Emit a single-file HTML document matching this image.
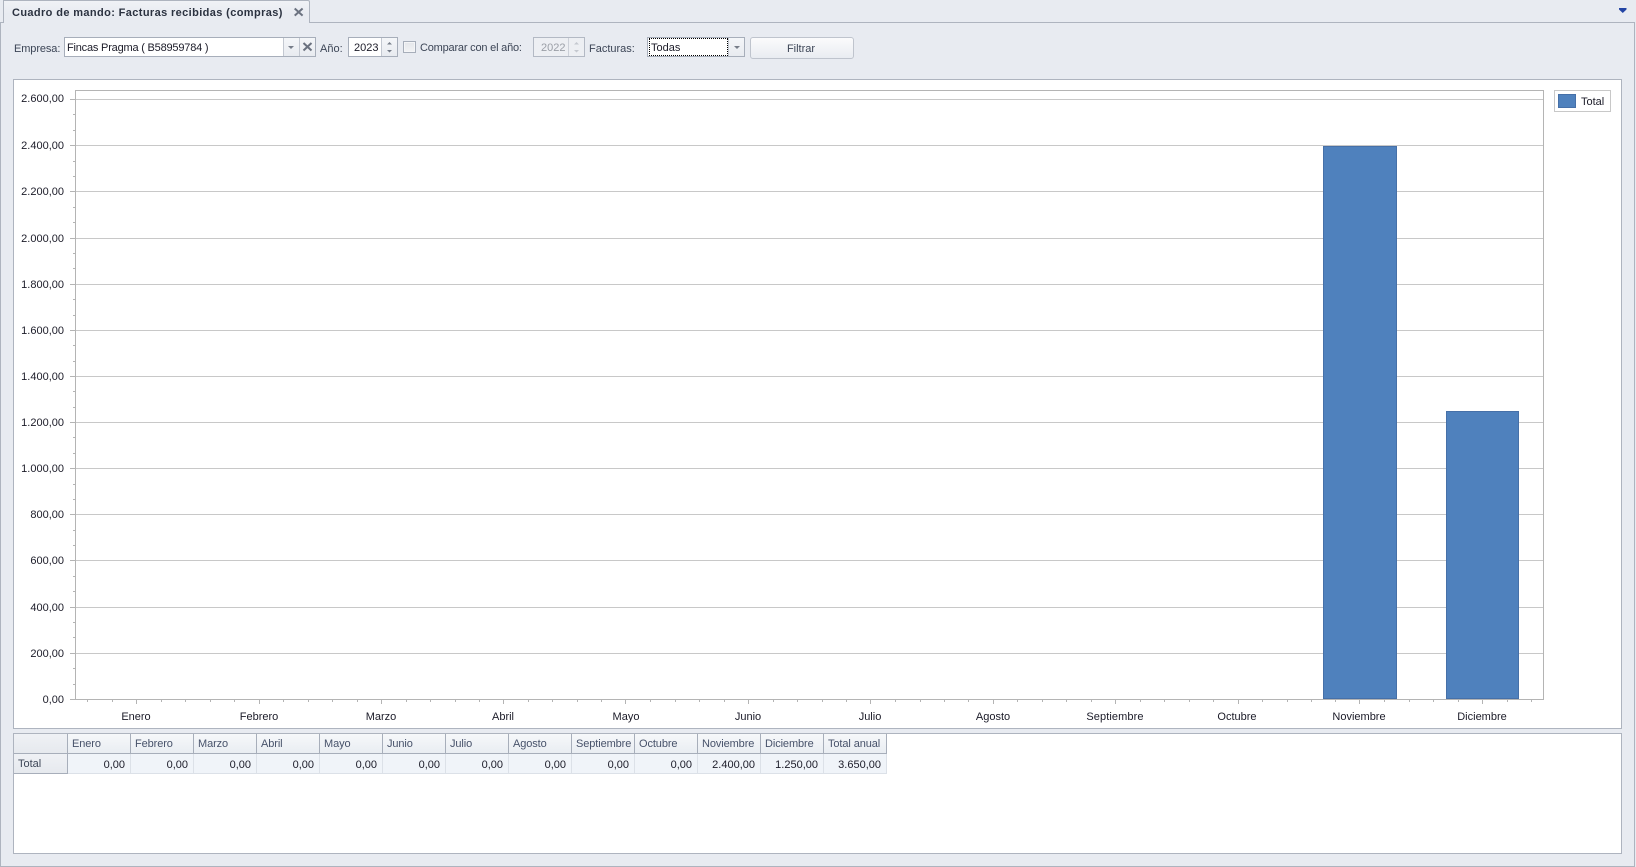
<!DOCTYPE html>
<html lang="es"><head><meta charset="utf-8"><title>Cuadro de mando</title>
<style>
html,body{margin:0;padding:0;width:1636px;height:867px;overflow:hidden;background:#E8EBF1}
body{position:relative;font:11px "Liberation Sans",Arial,sans-serif;color:#1b1b28}
.a{position:absolute;box-sizing:border-box}
.t{position:absolute;white-space:nowrap;line-height:14px;height:14px}
.lab{color:#3c4556}
.y{position:absolute;left:13px;width:51px;text-align:right;line-height:14px;white-space:nowrap}
.x{position:absolute;top:710px;width:100px;text-align:center;line-height:14px;white-space:nowrap}
.box{background:#fff;border:1px solid #A7AEBA}
.btn{background:linear-gradient(#f4f6f9,#e8ebf0);border-left:1px solid #C3C8D1}
table{position:absolute;left:14px;top:734px;border-collapse:separate;border-spacing:0;table-layout:fixed;width:872px}
td{box-sizing:border-box;height:20px;padding:0;overflow:hidden;white-space:nowrap;line-height:16px}
.h{background:linear-gradient(#f6f8fa,#e9edf2);border-right:1px solid #A7AEBA;border-bottom:1px solid #A7AEBA;padding:0 0 0 4px;color:#47526a;letter-spacing:-.1px}
.d{background:#F0F4F9;border-right:1px solid #DCE1E8;border-bottom:1px solid #DCE1E8;text-align:right;padding:3px 5px 0 0}
.r{background:linear-gradient(#eff1f5,#e6e9ee);border-right:1px solid #A7AEBA;border-bottom:1px solid #A7AEBA;padding:0 0 0 4px;color:#3c4556}
</style></head><body>

<!-- content frame -->
<div class="a" style="left:0;top:22px;width:1635px;height:845px;border:1px solid #AEB4BF"></div>
<!-- tab -->
<div class="a" style="left:3px;top:0;width:307px;height:23px;background:linear-gradient(#f0f2f6,#e8ebf1 60%);border:1px solid #AEB4BF;border-bottom:none;border-top-right-radius:2px"></div>
<div class="t" style="left:12px;top:6px;font-weight:bold;color:#2b3240;letter-spacing:.38px">Cuadro de mando: Facturas recibidas (compras)</div>
<svg class="a" style="left:294px;top:7px" width="10" height="10"><path d="M.7 1.5L8.6 8.6M8.6 1.5L.7 8.6" stroke="#6b7280" stroke-width="2" fill="none"/></svg>
<svg class="a" style="left:1619px;top:8px" width="8" height="5"><path d="M0 0H7.5V1.5L3.75 5L0 1.5Z" fill="#2344A4"/></svg>

<!-- toolbar -->
<div class="t lab" style="left:14px;top:42px;letter-spacing:-.1px">Empresa:</div>
<div class="a box" style="left:64px;top:37px;width:252px;height:20px"></div>
<div class="t" style="left:67px;top:41px;letter-spacing:-.2px">Fincas Pragma ( B58959784 )</div>
<div class="a btn" style="left:283px;top:38px;width:16px;height:18px"></div>
<div class="a btn" style="left:299px;top:38px;width:16px;height:18px"></div>
<svg class="a" style="left:288px;top:46px" width="7" height="4"><path d="M0 0H6L3 3Z" fill="#767d89"/></svg>
<svg class="a" style="left:302px;top:42px" width="11" height="10"><path d="M1.5 1L9.5 8.5M9.5 1L1.5 8.5" stroke="#6b7280" stroke-width="2" fill="none"/></svg>

<div class="t lab" style="left:320px;top:42px">Año:</div>
<div class="a box" style="left:348px;top:37px;width:50px;height:20px"></div>
<div class="t" style="left:354px;top:41px">2023</div>
<div class="a btn" style="left:381px;top:38px;width:16px;height:18px"></div>
<svg class="a" style="left:387px;top:41px" width="5" height="13"><path d="M2.5 1L5 3.5H0ZM0 9H5L2.5 11.5Z" fill="#767d89"/></svg>

<div class="a" style="left:403px;top:41px;width:13px;height:12px;background:linear-gradient(#e4e6ea,#f2f3f5);border:1px solid #A7AEBA;box-shadow:inset 0 0 0 1px #f4f5f7"></div>
<div class="t lab" style="left:420px;top:41px;letter-spacing:-.2px">Comparar con el año:</div>

<div class="a" style="left:533px;top:37px;width:52px;height:20px;background:#EDEFF3;border:1px solid #B3B9C4"></div>
<div class="t" style="left:541px;top:41px;color:#9a9ea6">2022</div>
<div class="a" style="left:568px;top:38px;width:16px;height:18px;background:#EDEFF3;border-left:1px solid #CCD0D8"></div>
<svg class="a" style="left:574px;top:41px" width="5" height="13"><path d="M2.5 1L5 3.5H0ZM0 9H5L2.5 11.5Z" fill="#C4C8CF"/></svg>

<div class="t lab" style="left:589px;top:42px">Facturas:</div>
<div class="a box" style="left:647px;top:37px;width:98px;height:20px"></div>
<div class="a" style="left:649px;top:38px;width:79px;height:18px;border:1px dotted #000"></div>
<div class="t" style="left:651px;top:41px">Todas</div>
<div class="a btn" style="left:728px;top:38px;width:16px;height:18px"></div>
<svg class="a" style="left:734px;top:46px" width="7" height="4"><path d="M0 0H6L3 3Z" fill="#767d89"/></svg>

<div class="a" style="left:750px;top:37px;width:104px;height:22px;background:linear-gradient(#fbfbfc,#e9ecf1);border:1px solid #BFC4CD;border-radius:3px"></div>
<div class="t lab" style="left:749px;top:42px;width:104px;text-align:center">Filtrar</div>

<!-- chart panel -->
<div class="a" style="left:13px;top:79px;width:1609px;height:650px;background:#fff;border:1px solid #AEB4BF"></div>
<svg class="a" style="left:0;top:0" width="1636" height="867" shape-rendering="crispEdges">
<path fill="none" stroke="#C8C8C8" d="M75 99.5H1543M75 145.5H1543M75 191.5H1543M75 238.5H1543M75 284.5H1543M75 330.5H1543M75 376.5H1543M75 422.5H1543M75 468.5H1543M75 514.5H1543M75 560.5H1543M75 607.5H1543M75 653.5H1543"/>
<rect x="1323.5" y="146.5" width="73" height="552" fill="#4F81BD" stroke="#4670A8"/>
<rect x="1446.5" y="411.5" width="72" height="287" fill="#4F81BD" stroke="#4670A8"/>
<rect x="75.5" y="90.5" width="1468" height="609" fill="none" stroke="#B4B4B4"/>
<path fill="none" stroke="#B4B4B4" d="M70 99.5H75M70 145.5H75M70 191.5H75M70 238.5H75M70 284.5H75M70 330.5H75M70 376.5H75M70 422.5H75M70 468.5H75M70 514.5H75M70 560.5H75M70 607.5H75M70 653.5H75M70 699.5H75
M73 114.5H75M73 130.5H75M73 161.5H75M73 176.5H75M73 207.5H75M73 222.5H75M73 253.5H75M73 268.5H75M73 299.5H75M73 315.5H75M73 345.5H75M73 361.5H75M73 391.5H75M73 407.5H75M73 437.5H75M73 453.5H75M73 484.5H75M73 499.5H75M73 530.5H75M73 545.5H75M73 576.5H75M73 591.5H75M73 622.5H75M73 637.5H75M73 668.5H75M73 684.5H75
M136.5 700V704M259.5 700V704M381.5 700V704M503.5 700V704M625.5 700V704M748.5 700V704M870.5 700V704M993.5 700V704M1115.5 700V704M1238.5 700V704M1359.5 700V704M1482.5 700V704
M87.5 700V702M112.5 700V702M161.5 700V702M185.5 700V702M210.5 700V702M234.5 700V702M283.5 700V702M308.5 700V702M332.5 700V702M357.5 700V702M406.5 700V702M430.5 700V702M455.5 700V702M479.5 700V702M528.5 700V702M552.5 700V702M577.5 700V702M601.5 700V702M650.5 700V702M675.5 700V702M699.5 700V702M724.5 700V702M773.5 700V702M797.5 700V702M822.5 700V702M846.5 700V702M895.5 700V702M920.5 700V702M944.5 700V702M968.5 700V702M1017.5 700V702M1042.5 700V702M1066.5 700V702M1091.5 700V702M1140.5 700V702M1164.5 700V702M1189.5 700V702M1213.5 700V702M1262.5 700V702M1287.5 700V702M1311.5 700V702M1335.5 700V702M1384.5 700V702M1409.5 700V702M1433.5 700V702M1458.5 700V702M1507.5 700V702M1531.5 700V702"/>
<rect x="1554.5" y="90.5" width="56" height="21" fill="#fff" stroke="#C8C8C8"/>
<rect x="1558.5" y="94.5" width="17" height="13" fill="#4F81BD" stroke="#4670A8"/>
</svg>

<div class="t" style="left:1581px;top:95px">Total</div>

<div class="y" style="top:92px">2.600,00</div>
<div class="y" style="top:139px">2.400,00</div>
<div class="y" style="top:185px">2.200,00</div>
<div class="y" style="top:232px">2.000,00</div>
<div class="y" style="top:278px">1.800,00</div>
<div class="y" style="top:324px">1.600,00</div>
<div class="y" style="top:370px">1.400,00</div>
<div class="y" style="top:416px">1.200,00</div>
<div class="y" style="top:462px">1.000,00</div>
<div class="y" style="top:508px">800,00</div>
<div class="y" style="top:554px">600,00</div>
<div class="y" style="top:601px">400,00</div>
<div class="y" style="top:647px">200,00</div>
<div class="y" style="top:693px">0,00</div>

<div class="x" style="left:86px">Enero</div>
<div class="x" style="left:209px">Febrero</div>
<div class="x" style="left:331px">Marzo</div>
<div class="x" style="left:453px">Abril</div>
<div class="x" style="left:576px">Mayo</div>
<div class="x" style="left:698px">Junio</div>
<div class="x" style="left:820px">Julio</div>
<div class="x" style="left:943px">Agosto</div>
<div class="x" style="left:1065px;letter-spacing:.1px">Septiembre</div>
<div class="x" style="left:1187px">Octubre</div>
<div class="x" style="left:1309px">Noviembre</div>
<div class="x" style="left:1432px">Diciembre</div>

<!-- grid panel -->
<div class="a" style="left:13px;top:733px;width:1609px;height:121px;background:#fff;border:1px solid #AEB4BF"></div>
<table>
<colgroup><col style="width:54px"><col span="13" style="width:63px"></colgroup>
<tr><td class="r"></td><td class="h">Enero</td><td class="h">Febrero</td><td class="h">Marzo</td><td class="h">Abril</td><td class="h">Mayo</td><td class="h">Junio</td><td class="h">Julio</td><td class="h">Agosto</td><td class="h">Septiembre</td><td class="h">Octubre</td><td class="h">Noviembre</td><td class="h">Diciembre</td><td class="h">Total anual</td></tr>
<tr><td class="r">Total</td><td class="d">0,00</td><td class="d">0,00</td><td class="d">0,00</td><td class="d">0,00</td><td class="d">0,00</td><td class="d">0,00</td><td class="d">0,00</td><td class="d">0,00</td><td class="d">0,00</td><td class="d">0,00</td><td class="d">2.400,00</td><td class="d">1.250,00</td><td class="d">3.650,00</td></tr>
</table>
</body></html>
